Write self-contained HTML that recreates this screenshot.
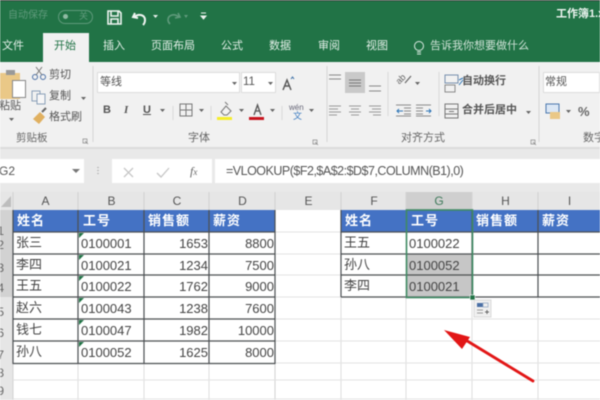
<!DOCTYPE html>
<html><head><meta charset="utf-8"><style>
html,body{margin:0;padding:0}
#p{position:relative;width:600px;height:400px;overflow:hidden;background:#fff;font-family:"Liberation Sans","Noto Sans CJK SC",sans-serif;color:#444;filter:blur(.4px)}
#p div,#p svg{position:absolute}
.t{white-space:nowrap;line-height:1}
.tab{color:#e3efe8;font-size:11px;top:41px}
.rb{color:#555;font-size:10px}
.c{font-size:13px;white-space:nowrap;line-height:22px;color:#444}
.h{color:#fff;font-size:13px;font-weight:bold;letter-spacing:1px;white-space:nowrap;line-height:22px}
.r{text-align:right}
.ch{top:192px;height:18px;line-height:19px;text-align:center;font-size:12px;color:#555;background:#e6e6e6}
.rh{left:-6px;width:10px;font-size:12px;color:#666;text-align:right}
.tri{width:0;height:0;border-top:5px solid #217346;border-right:5px solid transparent}
</style></head><body><div id="p">
<div style="left:0;top:0;width:600px;height:62px;background:#217346"></div>
<div style="left:0;top:0;width:600px;height:1px;background:#3a3f3c"></div>
<div class="t" style="left:8px;top:11px;font-size:10px;color:#5f9a7b">自动保存</div>
<div style="left:58px;top:10px;width:33px;height:12px;border:1px solid #5f9a7b;border-radius:7px"></div>
<div style="left:63px;top:14px;width:5px;height:5px;border-radius:50%;background:#8fbaa3"></div>
<div class="t" style="left:79px;top:12px;font-size:9px;color:#5f9a7b">关</div>
<svg style="left:0;top:0" width="600" height="62" fill="none" stroke="#f0f5f2">
<path d="M108 11h11l2 2v11h-13zM111 11v5h7v-5M111 24v-5h7v5" stroke-width="1.6"/>
<path d="M135 13l-2 4 5 1M134 17c5-4 11-2 11 3 0 2-1 4-2 5" stroke-width="2"/>
<path d="M153 15h5l-2.500 3z" fill="#e8f0ec" stroke="none"/>
<path d="M178 13l2 4-5 1M179 17c-5-4-11-2-11 3 0 2 1 3 2 4" stroke="#5f9a7b" stroke-width="1.600"/>
<path d="M184 15h4l-2 3z" fill="#5f9a7b" stroke="none"/>
<path d="M201 13h5M201 16h5l-2.500 3z" fill="#e8f0ec" stroke-width="1"/>
<circle cx="419" cy="46" r="4.500" stroke="#dcebe3" stroke-width="1"/><path d="M417 52h4M417 54h4" stroke="#dcebe3"/>
</svg>
<div class="t" style="left:556px;top:9px;font-size:11px;color:#eef5f1;font-weight:bold">工作簿1.x</div>
<div style="left:43px;top:33px;width:46px;height:30px;background:#f1f1f1"></div>
<div class="t tab" style="left:2px">文件</div>
<div class="t tab" style="left:54px;color:#217346">开始</div>
<div class="t tab" style="left:103px">插入</div>
<div class="t tab" style="left:151px">页面布局</div>
<div class="t tab" style="left:221px">公式</div>
<div class="t tab" style="left:269px">数据</div>
<div class="t tab" style="left:318px">审阅</div>
<div class="t tab" style="left:366px">视图</div>
<div class="t tab" style="left:430px;font-size:11px;color:#cfe2d7">告诉我你想要做什么</div>

<div style="left:0;top:62px;width:600px;height:86px;background:#f1f1f1"></div>
<div style="left:0;top:147px;width:600px;height:2px;background:#dcdcdc"></div>
<div style="left:0;top:149px;width:600px;height:43px;background:#e9e9e9"></div>
<!-- clipboard -->
<div style="left:0;top:73px;width:20px;height:26px;background:#eac887"></div>
<div style="left:6px;top:70px;width:9px;height:5px;background:#999"></div>
<div style="left:12px;top:80px;width:12px;height:16px;background:#fff;border:1px solid #888"></div>
<div class="t rb" style="left:-1px;top:101px;font-size:11px">粘贴</div>
<svg style="left:0;top:62px" width="600" height="86" fill="none" stroke="#666">
<path d="M9 56h5l-2.500 3z" fill="#666" stroke="none"/>
<circle cx="35" cy="15" r="2.500" stroke="#4a6fa5"/><circle cx="43" cy="15" r="2.500" stroke="#4a6fa5"/><path d="M36 13l6-8M42 13l-6-8" stroke="#777"/>
<rect x="32" y="29" width="8" height="10" stroke="#8a9fb8"/><rect x="37" y="32" width="8" height="10" fill="#f6f6f6" stroke="#8a9fb8"/>
<path d="M81 35h5l-2.500 3z" fill="#666" stroke="none"/>
<path d="M33 57l6 5 6-7-5-5z" fill="#e0b060" stroke="none"/><path d="M42 50l4-4" stroke="#666" stroke-width="2"/>
<path d="M83 77l4 0 0 4-4 0zM85 79l3 3" stroke="#888" stroke-width=".7"/>
<path d="M93 4v76M327 4v76M539 4v76" stroke="#d6d6d6"/>
<path d="M173 44v14M211 44v14M282 44v14M388 10v44M439 10v44" stroke="#d8d8d8"/>
<!-- font row icons -->
<path d="M283 28l4-10 4 10M284.500 24h5" stroke="#555" stroke-width="1.400"/><path d="M291 17l1.500-2 1.500 2" stroke="#3a6ea5"/>
<path d="M160 47h5l-2.500 3zM199 47h5l-2.500 3zM239 47h5l-2.500 3zM270 47h5l-2.500 3zM309 47h5l-2.500 3z" fill="#666" stroke="none"/>
<rect x="180" y="42" width="12" height="12" stroke="#777"/><path d="M186 42v12M180 48h12" stroke="#777"/>
<path d="M221 50l5-6 5 5-4 4h-3z" fill="#f2f2f2" stroke="#777"/><path d="M225 40l3 3" stroke="#777"/>
<rect x="217" y="55" width="15" height="3" fill="#f5ee2b" stroke="none"/>
<path d="M254 53l3.500-10 3.500 10M255 49h5" stroke="#555" stroke-width="1.300"/>
<rect x="249" y="55" width="15" height="3" fill="#c8141e" stroke="none"/>
<!-- align -->
<path d="M329 13h12M329 17h12" stroke="#888"/>
<rect x="345" y="10" width="20" height="21" fill="#c9c9c9" stroke="none"/>
<path d="M349 18h12M349 21h12M349 24h12" stroke="#777"/>
<path d="M369 24h12M369 29h12" stroke="#888"/>
<path d="M329 44h12M329 47h9M329 50h12M329 53h8M349 44h12M351 47h8M349 50h12M351 53h8M369 44h12M372 47h9M369 50h12M373 53h8" stroke="#999"/>
<path d="M405 21l6-7" stroke="#666" stroke-width="1.200"/><path d="M415 20h5l-2.500 3z" fill="#666" stroke="none"/>
<path d="M396 43h15M396 54h15M404 46h7M404 49h7M404 52h7M416 43h15M416 54h15M416 46h7M416 49h7M416 52h7" stroke="#8a8a8a"/>
<path d="M403 49h-6M399 47l-2 2 2 2M426 49h5M429 47l2 2-2 2" stroke="#2e75b6"/>
<rect x="445" y="13" width="13" height="8" stroke="#7790ad"/><rect x="445" y="23" width="10" height="7" stroke="#8a8a8a"/><path d="M459 18l4-2M459 23l4-5" stroke="#2e75b6"/>
<rect x="445" y="42" width="13" height="14" stroke="#777"/><path d="M445 47h13M445 52h13M449 49.500h5" stroke="#777"/>
<path d="M526 49h5l-2.500 3z" fill="#666" stroke="none"/>
<path d="M531 78l4 0 0 4-4 0zM533 80l3 3M313 78l4 0 0 4-4 0zM315 80l3 3" stroke="#888" stroke-width=".7"/>
<!-- number -->
<rect x="546" y="42" width="13" height="9" fill="#dbe7f5" stroke="#4a77ad"/><rect x="550" y="50" width="10" height="7" fill="#eac887" stroke="none"/>
<path d="M566 48h5l-2.500 3z" fill="#666" stroke="none"/>
</svg>
<div class="t" style="left:396px;top:75px;font-size:9px;color:#666;transform:rotate(-45deg)">ab</div>
<div class="t rb" style="left:49px;top:70px;font-size:11px">剪切</div>
<div class="t rb" style="left:49px;top:91px;font-size:11px">复制</div>
<div class="t rb" style="left:49px;top:112px;font-size:11px">格式刷</div>
<div class="t rb" style="left:16px;top:133px;font-size:10.500px;color:#666">剪贴板</div>
<div style="left:97px;top:72px;width:143px;height:21px;background:#fff;border:1px solid #ddd;box-sizing:border-box"></div>
<div style="left:241px;top:72px;width:35px;height:21px;background:#fff;border:1px solid #ddd;box-sizing:border-box"></div>
<svg style="left:0;top:62px" width="300" height="30"><path d="M232 20h5l-2.500 3zM268 20h5l-2.500 3z" fill="#666"/></svg>
<div class="t rb" style="left:100px;top:77px;font-size:11px">等线</div>
<div class="t rb" style="left:243px;top:77px;font-size:11.500px">11</div>
<div class="t" style="left:103px;top:105px;font-size:11px;font-weight:bold;color:#555">B</div>
<div class="t" style="left:124px;top:105px;font-size:11px;font-style:italic;font-family:'Liberation Serif',serif;font-weight:bold;color:#555">I</div>
<div class="t" style="left:143px;top:105px;font-size:11px;font-weight:bold;color:#555;text-decoration:underline">U</div>
<div class="t" style="left:289px;top:104px;font-size:8px;color:#667">wén</div>
<div class="t" style="left:293px;top:112px;font-size:9px;color:#3a7ac0">文</div>
<div class="t rb" style="left:188px;top:133px;font-size:11px;color:#666">字体</div>
<div class="t rb" style="left:462px;top:76px;font-size:11px;font-weight:bold;color:#555">自动换行</div>
<div class="t rb" style="left:462px;top:105px;font-size:11px;font-weight:bold;color:#555">合并后居中</div>
<div class="t rb" style="left:401px;top:133px;font-size:11px;color:#666">对齐方式</div>
<div style="left:543px;top:72px;width:57px;height:21px;background:#fff;border:1px solid #ddd;box-sizing:border-box"></div>
<div class="t rb" style="left:545px;top:77px;font-size:11px">常规</div>
<div class="t" style="left:578px;top:105px;font-size:13px;font-weight:bold;color:#666">%</div>
<div class="t rb" style="left:583px;top:133px;font-size:11px;color:#666">数字</div>

<!-- formula bar -->
<div style="left:0;top:159px;width:84px;height:24px;background:#fff"></div>
<div class="t" style="left:-1px;top:165px;font-size:12px;color:#555">G2</div>
<div style="left:112px;top:159px;width:100px;height:24px;background:#fff"></div>
<div style="left:215px;top:159px;width:385px;height:24px;background:#fff"></div>
<svg style="left:0;top:150px" width="215" height="42" fill="none">
<path d="M72 19h8l-4 4z" fill="#777"/>
<path d="M98 17v1M98 20v1M98 23v1" stroke="#aaa" stroke-width="1.500"/>
<path d="M124 18l9 9M133 18l-9 9" stroke="#c6c6c6" stroke-width="1.300"/>
<path d="M157 23l4 4 8-9" stroke="#c6c6c6" stroke-width="1.300"/>
</svg>
<div class="t" style="left:190px;top:165px;font-size:12px;font-style:italic;font-family:'Liberation Serif',serif;color:#666">f<span style="font-size:9px">x</span></div>
<div class="t" style="left:226px;top:165px;font-size:12.5px;letter-spacing:-.5px;color:#555">=VLOOKUP($F2,$A$2:$D$7,COLUMN(B1),0)</div>

<!-- headers -->
<div style="left:0;top:192px;width:600px;height:18px;background:#e6e6e6"></div>
<svg style="left:0;top:194px" width="13" height="14"><path d="M11 2v11H1z" fill="#bdbdbd"/></svg>
<div class="ch" style="left:13px;width:65px">A</div>
<div class="ch" style="left:79px;width:65px">B</div>
<div class="ch" style="left:145px;width:64px">C</div>
<div class="ch" style="left:210px;width:65px">D</div>
<div class="ch" style="left:276px;width:65px">E</div>
<div class="ch" style="left:342px;width:64px">F</div>
<div class="ch" style="left:406px;width:66px;background:#cfcfcf;color:#3f7a5b">G</div>
<div class="ch" style="left:473px;width:65px">H</div>
<div class="ch" style="left:539px;width:61px">I</div>
<div style="left:0;top:210px;width:13px;height:190px;background:#e6e6e6"></div>
<div style="left:0;top:210px;width:13px;height:87px;background:#d2d2d2"></div>
<div class="t rh" style="top:225px">1</div>
<div class="t rh" style="top:239px">2</div>
<div class="t rh" style="top:262px">3</div>
<div class="t rh" style="top:282px">4</div>
<div class="t rh" style="top:306px">5</div>
<div class="t rh" style="top:327px">6</div>
<div class="t rh" style="top:349px">7</div>
<div class="t rh" style="top:367px">8</div>
<div class="t rh" style="top:385px">9</div>

<!-- grid -->
<svg style="left:0;top:0" width="600" height="400" fill="none">
<path d="M13 192v208M78 192v18M144 192v18M209 192v18M275 192v208M341 192v18M406 192v18M472 192v18M538 192v18" stroke="#d2d2d2"/>
<path d="M78 363v37M144 363v37M209 363v37M341 297v103M406 297v103M472 297v103M538 297v103" stroke="#dedede"/>
<path d="M275 232H341M275 254H341M275 275H341M275 297H341M275 319H600M275 341H600M275 363H600M13 380H600M13 399H600" stroke="#e2e2e2"/>
<path d="M341 319H600" stroke="#e2e2e2"/>
<rect x="13" y="210" width="262" height="22" fill="#4472c4"/>
<rect x="341" y="210" width="259" height="22" fill="#4472c4"/>
<rect x="407" y="254" width="65" height="43" fill="#c6c6c6"/>
<path d="M13 232H275M13 254H275M13 275H275M13 297H275M13 319H275M13 341H275M13 363.500H275M13 210v154M78 210v154M144 210v154M209 210v154M275 210v154" stroke="#4b4f52" stroke-width="1.200"/>
<path d="M341 232H600M341 254H600M341 275H600M341 297H600M341 210v87M472 210v87M538 210v87" stroke="#4b4f52" stroke-width="1.200"/>
<rect x="406.500" y="210" width="66" height="87.500" stroke="#3f8a63" stroke-width="1.600"/>
<rect x="470" y="295" width="5" height="5" fill="#217346" stroke="#fff" stroke-width=".6"/>
<rect x="474" y="300" width="17" height="17" fill="#f0f0f0" stroke="#dadada"/>
<rect x="477" y="303" width="6" height="4" fill="#4a6fa5"/><rect x="483" y="303" width="5" height="4" stroke="#8aa0bc" stroke-width=".7"/>
<path d="M477 310h6M477 313h6" stroke="#999"/><path d="M485 312h4M487 310v4" stroke="#666"/>
<!-- arrow -->
<path d="M533 381L464 339" stroke="#e21616" stroke-width="2.800" stroke-linecap="round"/>
<path d="M444 330L470 337L462 349Z" fill="#e21616"/>
</svg>
<div class="tri" style="left:79px;top:233px"></div>
<div class="tri" style="left:79px;top:255px"></div>
<div class="tri" style="left:79px;top:276px"></div>
<div class="tri" style="left:79px;top:298px"></div>
<div class="tri" style="left:79px;top:320px"></div>
<div class="tri" style="left:79px;top:342px"></div>

<!-- left table -->
<div class="h" style="left:17px;top:210px">姓名</div>
<div class="h" style="left:83px;top:210px">工号</div>
<div class="h" style="left:148px;top:210px">销售额</div>
<div class="h" style="left:213px;top:210px">薪资</div>
<div class="c" style="left:16px;top:232px">张三</div><div class="c" style="left:81px;top:233px">0100001</div><div class="c r" style="left:144px;width:64px;top:233px">1653</div><div class="c r" style="left:209px;width:65px;top:233px">8800</div>
<div class="c" style="left:16px;top:254px">李四</div><div class="c" style="left:81px;top:255px">0100021</div><div class="c r" style="left:144px;width:64px;top:255px">1234</div><div class="c r" style="left:209px;width:65px;top:255px">7500</div>
<div class="c" style="left:16px;top:275px">王五</div><div class="c" style="left:81px;top:276px">0100022</div><div class="c r" style="left:144px;width:64px;top:276px">1762</div><div class="c r" style="left:209px;width:65px;top:276px">9000</div>
<div class="c" style="left:16px;top:297px">赵六</div><div class="c" style="left:81px;top:298px">0100043</div><div class="c r" style="left:144px;width:64px;top:298px">1238</div><div class="c r" style="left:209px;width:65px;top:298px">7600</div>
<div class="c" style="left:16px;top:319px">钱七</div><div class="c" style="left:81px;top:320px">0100047</div><div class="c r" style="left:144px;width:64px;top:320px">1982</div><div class="c r" style="left:209px;width:65px;top:320px">10000</div>
<div class="c" style="left:16px;top:341px">孙八</div><div class="c" style="left:81px;top:342px">0100052</div><div class="c r" style="left:144px;width:64px;top:342px">1625</div><div class="c r" style="left:209px;width:65px;top:342px">8000</div>

<!-- right table -->
<div class="h" style="left:345px;top:210px">姓名</div>
<div class="h" style="left:411px;top:210px">工号</div>
<div class="h" style="left:476px;top:210px">销售额</div>
<div class="h" style="left:542px;top:210px">薪资</div>
<div class="c" style="left:344px;top:232px">王五</div><div class="c" style="left:409px;top:233px">0100022</div>
<div class="c" style="left:344px;top:254px">孙八</div><div class="c" style="left:409px;top:255px">0100052</div>
<div class="c" style="left:344px;top:275px">李四</div><div class="c" style="left:409px;top:276px">0100021</div>
</div></body></html>
